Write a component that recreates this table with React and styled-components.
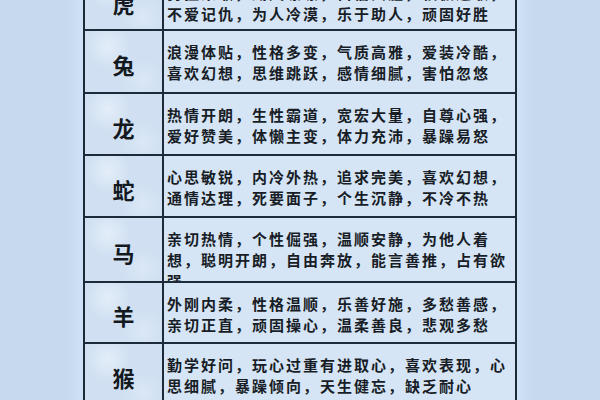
import styled, { createGlobalStyle } from "styled-components";

const GlobalStyle = createGlobalStyle`
  html, body {
    margin: 0;
    padding: 0;
  }
  body {
    background: #c7d9ee;
    font-family: "Noto Sans CJK SC", "Noto Sans", sans-serif;
  }
`;

const Page = styled.div`
  width: 600px;
  height: 400px;
  overflow: hidden;
  display: flex;
  justify-content: center;
  align-items: flex-start;
  background: #c7d9ee;
`;

const Table = styled.div`
  margin-top: -30px;
  width: 434px;
  box-sizing: border-box;
  display: grid;
  grid-template-columns: 77px 1fr;
  grid-template-rows: ${(props) => props.rows.map((h) => `${h}px`).join(" ")};
  gap: 2px;
  padding: 2px;
  background: #1d2a3a;
  box-shadow: 0 0 14px 8px rgba(214, 232, 252, 0.65);
`;

const AnimalCell = styled.div`
  display: flex;
  align-items: center;
  justify-content: center;
  padding-top: 5px;
  box-sizing: border-box;
  overflow: hidden;
  background: radial-gradient(circle at 30% 25%, rgba(236, 243, 251, 0.7) 0, rgba(236, 243, 251, 0) 22px),
    radial-gradient(circle at 75% 80%, rgba(225, 236, 248, 0.6) 0, rgba(225, 236, 248, 0) 20px),
    #d0e0f2;
  color: #141920;
  font-size: 22px;
  font-weight: 700;
  line-height: 1;
`;

const TraitCell = styled.div`
  padding: 10px 0 0 3px;
  box-sizing: border-box;
  overflow: hidden;
  white-space: nowrap;
  background: #d5e5f6;
  color: #181d26;
  font-size: 15px;
  font-weight: 600;
  line-height: 21px;
  letter-spacing: 2px;
`;

const Line = styled.div``;

const zodiac = [
  {
    name: "虎",
    height: 57,
    lines: ["勇猛果敢，威风凛凛，自信大胆，积极进取，", "不爱记仇，为人冷漠，乐于助人，顽固好胜"],
  },
  {
    name: "兔",
    height: 61,
    lines: ["浪漫体贴，性格多变，气质高雅，爱装冷酷，", "喜欢幻想，思维跳跃，感情细腻，害怕忽悠"],
  },
  {
    name: "龙",
    height: 60,
    lines: ["热情开朗，生性霸道，宽宏大量，自尊心强，", "爱好赞美，体懒主变，体力充沛，暴躁易怒"],
  },
  {
    name: "蛇",
    height: 60,
    lines: ["心思敏锐，内冷外热，追求完美，喜欢幻想，", "通情达理，死要面子，个生沉静，不冷不热"],
  },
  {
    name: "马",
    height: 63,
    lines: [
      "亲切热情，个性倔强，温顺安静，为他人着",
      "想，聪明开朗，自由奔放，能言善推，占有欲",
      "强",
    ],
  },
  {
    name: "羊",
    height: 59,
    lines: ["外刚内柔，性格温顺，乐善好施，多愁善感，", "亲切正直，顽固操心，温柔善良，悲观多愁"],
  },
  {
    name: "猴",
    height: 61,
    lines: ["勤学好问，玩心过重有进取心，喜欢表现，心", "思细腻，暴躁倾向，天生健忘，缺乏耐心"],
  },
];

const App = () => {
  return (
    <>
      <GlobalStyle />
      <Page>
        <Table rows={zodiac.map((z) => z.height)}>
          {zodiac.map((z) => [
            <AnimalCell key={`${z.name}-a`}>{z.name}</AnimalCell>,
            <TraitCell key={`${z.name}-t`}>
              {z.lines.map((line) => (
                <Line key={line}>{line}</Line>
              ))}
            </TraitCell>,
          ])}
        </Table>
      </Page>
    </>
  );
};

export default App;
